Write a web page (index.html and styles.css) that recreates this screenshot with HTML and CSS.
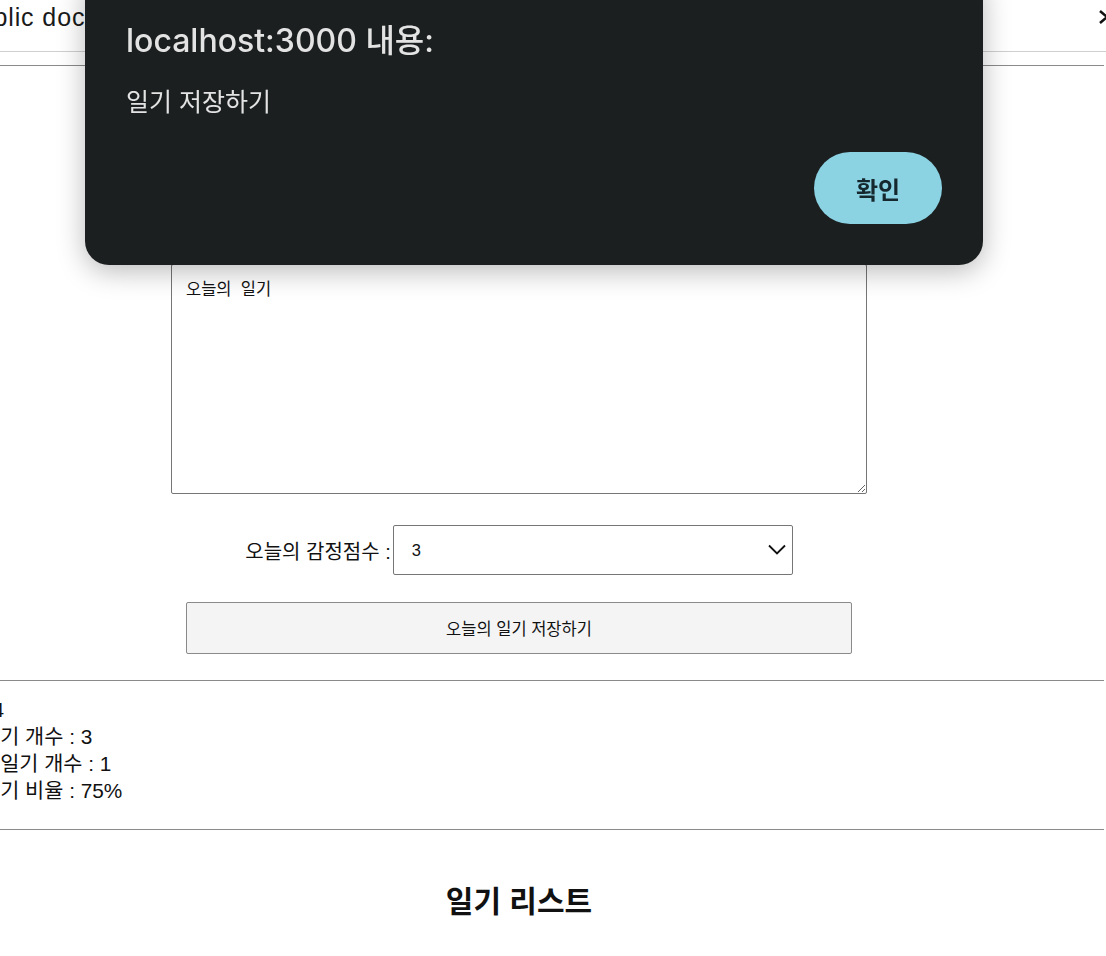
FILE: index.html
```html
<!DOCTYPE html>
<html lang="ko">
<head>
<meta charset="utf-8">
<title>Diary</title>
<link rel="stylesheet" href="styles.css">
</head>
<body>
<div class="page">
  <div class="topbar">
    <span class="topbar-title">Public documentation</span>
    <svg class="topbar-chevron" width="12" height="16" viewBox="0 0 12 16"><path d="M2 2 L9 8 L2 14" fill="none" stroke="#111" stroke-width="2.6"/></svg>
  </div>
  <div class="rule rule-top"></div>

  <div class="editor">
    <h2 class="editor-title">오늘의 일기</h2>
    <div class="author-row"><input class="author" value="작성자"></div>
    <textarea class="content">오늘의  일기</textarea>
    <div class="score-row">
      <span class="score-label">오늘의 감정점수 :</span>
      <div class="select-wrap">
        <select class="score"><option>3</option></select>
        <svg class="select-chevron" width="18" height="11" viewBox="0 0 18 11"><path d="M1 1.5 L9 9.5 L17 1.5" fill="none" stroke="#111" stroke-width="1.8"/></svg>
      </div>
    </div>
    <div class="save-row"><button class="save">오늘의 일기 저장하기</button></div>
  </div>

  <div class="rule rule-mid"></div>
  <div class="stats">
    <div>전체 : 4</div>
    <div>좋은 일기 개수 : 3</div>
    <div>안좋은 일기 개수 : 1</div>
    <div>좋은 일기 비율 : 75%</div>
  </div>
  <div class="rule rule-bottom"></div>
  <h2 class="list-title">일기 리스트</h2>
</div>

<div class="dialog">
  <div class="dialog-title">localhost:3000 내용:</div>
  <div class="dialog-msg">일기 저장하기</div>
  <div class="dialog-actions"><button class="dialog-ok">확인</button></div>
</div>
</body>
</html>
```
FILE: styles.css
```css
html, body {
  margin: 0;
  padding: 0;
  background: #fff;
  overflow: hidden;
  width: 1106px;
  height: 956px;
}
body {
  font-family: "Liberation Sans", "Noto Sans CJK KR", sans-serif;
  color: #111;
}
.page {
  width: 1170px;
  margin-left: -66px;
}
.topbar {
  height: 52px;
  border-bottom: 1px solid #cfcfcf;
  display: flex;
  justify-content: space-between;
  align-items: flex-start;
  padding-left: 27px;
  margin-right: -10px;
  box-sizing: border-box;
}
.topbar-title {
  font-size: 25px;
  line-height: 28px;
  letter-spacing: 0.9px;
  margin-top: 3px;
  color: #1a1a1a;
  white-space: nowrap;
}
.topbar-chevron {
  margin-top: 9px;
  margin-right: 4px;
}
.rule {
  border-top: 1px solid #8a8a8a;
  height: 0;
}
.rule-top { margin-top: 13px; }

.editor {
  display: flex;
  flex-direction: column;
  align-items: center;
}
.editor-title {
  margin: 40px 0 0;
  font-size: 30px;
  line-height: 40px;
}
.author-row { margin-top: 24px; }
.author {
  width: 400px;
  height: 40px;
  box-sizing: border-box;
  font-size: 16px;
}
.content {
  margin-top: 54px;
  width: 696px;
  height: 230px;
  box-sizing: border-box;
  border: 1px solid #767676;
  border-radius: 2px;
  padding: 13px 14px;
  font-family: "Liberation Sans", "Noto Sans CJK KR", sans-serif;
  font-size: 16.5px;
  line-height: 22px;
  color: #111;
  resize: both;
}
.score-row {
  margin-top: 31px;
  display: flex;
  align-items: center;
  gap: 2px;
}
.score-label {
  font-size: 20px;
}
.select-wrap {
  position: relative;
  display: flex;
}
.score {
  appearance: none;
  -webkit-appearance: none;
  width: 400px;
  height: 50px;
  box-sizing: border-box;
  border: 1px solid #767676;
  border-radius: 2px;
  background: #fff;
  padding: 0 18px;
  font-family: "Liberation Sans", "Noto Sans CJK KR", sans-serif;
  font-size: 16.5px;
  color: #111;
}
.select-chevron {
  position: absolute;
  right: 7px;
  top: 19px;
  pointer-events: none;
}
.save-row { margin-top: 27px; }
.save {
  width: 666px;
  height: 52px;
  box-sizing: border-box;
  border: 1px solid #8a8a8a;
  border-radius: 2px;
  background: #f4f4f4;
  font-family: "Liberation Sans", "Noto Sans CJK KR", sans-serif;
  font-size: 16.5px;
  color: #111;
}
.rule-mid { margin-top: 26px; }
.stats {
  margin: 15px 0 0 3px;
  font-size: 20.8px;
  line-height: 27px;
  white-space: nowrap;
}
.rule-bottom { margin-top: 25px; }
.list-title {
  margin: 52px 0 0;
  text-align: center;
  font-size: 30px;
  line-height: 40px;
  font-weight: 700;
}

.dialog {
  position: fixed;
  left: 85px;
  top: -30px;
  width: 898px;
  height: 295px;
  box-sizing: border-box;
  background: #1b1f20;
  border-radius: 24px;
  box-shadow: 0 6px 28px rgba(0, 0, 0, 0.28);
  padding: 50px 41px 0;
  font-family: Inter, "Noto Sans CJK KR", sans-serif;
  color: #e3e3e3;
  display: flex;
  flex-direction: column;
}
.dialog-title {
  font-size: 32px;
  line-height: 42px;
  font-weight: 500;
}
.dialog-msg {
  margin-top: 24px;
  font-size: 25px;
  line-height: 32px;
}
.dialog-actions {
  margin-top: 34px;
  display: flex;
  justify-content: flex-end;
}
.dialog-ok {
  width: 128px;
  height: 72px;
  border: none;
  border-radius: 36px;
  background: #8bd2e3;
  color: #15282e;
  font-family: Inter, "Noto Sans CJK KR", sans-serif;
  font-size: 24px;
  font-weight: 600;
}
```
